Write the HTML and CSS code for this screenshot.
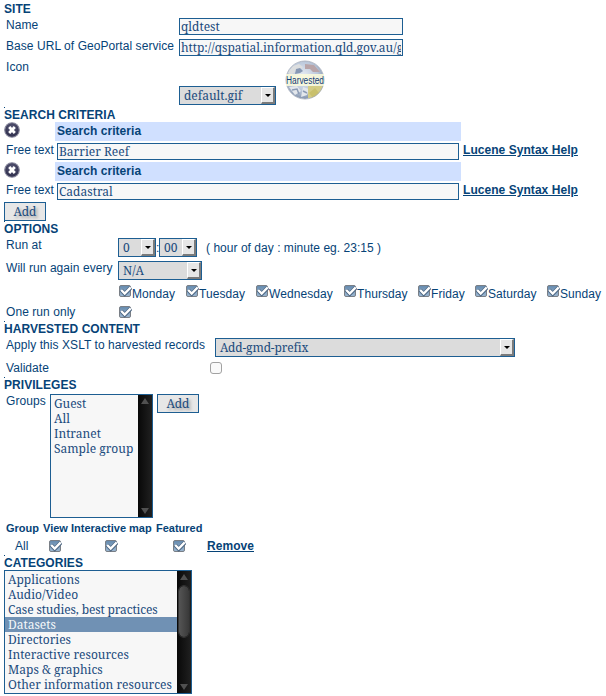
FILE: index.html
```html
<!DOCTYPE html>
<html lang="en">
<head>
<meta charset="utf-8">
<title>Harvesting</title>
<link rel="stylesheet" href="styles.css">
</head>
<body>
<svg width="0" height="0" class="defs">
  <defs>
    <linearGradient id="box" x1="0" y1="0" x2="0" y2="1"><stop offset="0" stop-color="#6489ad"/><stop offset="1" stop-color="#9db8d2"/></linearGradient>
    <radialGradient id="dark" cx=".5" cy=".35" r=".65"><stop offset="0" stop-color="#5a5a78"/><stop offset="1" stop-color="#2a2a48"/></radialGradient>
    <radialGradient id="globe" cx=".45" cy=".4" r=".6"><stop offset="0" stop-color="#e8edf4"/><stop offset=".65" stop-color="#bac7da"/><stop offset="1" stop-color="#8494ad"/></radialGradient>
    <clipPath id="disc"><circle cx="20" cy="20" r="19"/></clipPath>
    <symbol id="check" viewBox="0 0 13 13">
      <rect x=".5" y=".5" width="11" height="11" rx="1.5" fill="url(#box)" stroke="#7a7f86"/>
      <path d="M2.2 5 5.7 8.8 11.9 2.4" fill="none" stroke="#4a6480" stroke-width="4"/>
      <path d="M2.2 5 5.7 8.6 11.7 2.4" fill="none" stroke="#fff" stroke-width="2.3"/>
    </symbol>
    <symbol id="remove" viewBox="0 0 16 16">
      <circle cx="8" cy="8" r="7.3" fill="url(#dark)" stroke="#8a8a9e" stroke-width="1.1"/>
      <path d="M5.2 5 10.8 11M10.8 5 5.2 11" stroke="#fff" stroke-width="2.8"/>
    </symbol>
  </defs>
</svg>
<main>
  <h2>SITE</h2>
  <div class="row site"><label>Name</label><input class="field" value="qldtest"></div>
  <div class="row site"><label>Base URL of GeoPortal service</label><input class="field url" value="http://qspatial.information.qld.gov.au/geoportal"></div>
  <div class="row site icon-row"><label>Icon</label><span class="select w-icon">default.gif<i></i></span>
    <svg class="globe" width="40" height="40" viewBox="0 0 40 40">
      <g clip-path="url(#disc)">
        <circle cx="20" cy="20" r="19" fill="url(#globe)"/>
        <path d="M8 6 14 4 18 7 14 11 10 12 5 16 3 12Z" fill="#dcdedf"/>
        <path d="M20 4 29 5 35 12 28 12 25 9 20 9Z" fill="#b8a4a8"/>
        <path d="M11 9 15 8 18 11 15 13 10 14Z" fill="#8798b3"/>
        <path d="M4 27 12 26 16 31 10 35ZM18 27 24 29 22 35 16 37Z" fill="#e3e7ec"/>
        <path d="M7 30 12 29 14 34M18 31 22 33" fill="none" stroke="#8c9bb4" stroke-width="1.5"/>
        <path d="M23 26H38L36 33 29 39 23 38Z" fill="#d3cc85"/>
        <path d="M24 33 30 28 34 33 29 39Z" fill="#c9c06c"/>
      </g>
      <circle cx="20" cy="20" r="19" fill="none" stroke="#a3abb9" stroke-width=".8"/>
      <rect x="1" y="14" width="38" height="12" fill="#fbfbdc" opacity=".88"/>
      <text x="1" y="24" textLength="38" lengthAdjust="spacingAndGlyphs">Harvested</text>
    </svg>
  </div>

  <h2 class="dot">SEARCH CRITERIA</h2>
  <div class="row criteria"><svg width="16" height="16"><use href="#remove"/></svg><b>Search criteria</b></div>
  <div class="row free"><label>Free text</label><input class="field" value="Barrier Reef"><a>Lucene Syntax Help</a></div>
  <div class="row criteria"><svg width="16" height="16"><use href="#remove"/></svg><b>Search criteria</b></div>
  <div class="row free"><label>Free text</label><input class="field" value="Cadastral"><a>Lucene Syntax Help</a></div>
  <button class="below">Add</button>

  <h2 class="dot">OPTIONS</h2>
  <div class="row options"><label>Run at</label><span class="select w-hour">0<i></i></span><span class="colon">:</span><span class="select w-hour">00<i></i></span><span class="hint">( hour of day : minute eg. 23:15 )</span></div>
  <div class="row options"><label>Will run again every</label><span class="select w-every">N/A<i></i></span></div>
  <div class="days">
    <span class="d67"><svg width="13" height="13"><use href="#check"/></svg>Monday</span>
    <span class="d70"><svg width="13" height="13"><use href="#check"/></svg>Tuesday</span>
    <span class="d88"><svg width="13" height="13"><use href="#check"/></svg>Wednesday</span>
    <span class="d74"><svg width="13" height="13"><use href="#check"/></svg>Thursday</span>
    <span class="d57"><svg width="13" height="13"><use href="#check"/></svg>Friday</span>
    <span class="d72"><svg width="13" height="13"><use href="#check"/></svg>Saturday</span>
    <span><svg width="13" height="13"><use href="#check"/></svg>Sunday</span>
  </div>
  <div class="row once"><label>One run only</label><svg width="13" height="13"><use href="#check"/></svg></div>

  <h2 class="dot">HARVESTED CONTENT</h2>
  <div class="row content"><label>Apply this XSLT to harvested records</label><span class="select w-xslt">Add-gmd-prefix<i></i></span></div>
  <div class="row validate"><label>Validate</label><span class="unchecked"></span></div>

  <h2 class="dot">PRIVILEGES</h2>
  <div class="row groups"><label>Groups</label>
    <div class="list"><ul><li>Guest</li><li>All</li><li>Intranet</li><li>Sample group</li></ul>
      <div class="bar"><i class="up"></i><i class="down"></i></div></div>
    <button>Add</button>
  </div>
  <div class="priv head"><b>Group</b><b>View</b><b>Interactive map</b><b>Featured</b></div>
  <div class="priv"><span>All</span><svg width="13" height="13"><use href="#check"/></svg><svg width="13" height="13"><use href="#check"/></svg><svg width="13" height="13"><use href="#check"/></svg><a>Remove</a></div>

  <h2 class="dot">CATEGORIES</h2>
  <div class="list categories"><ul><li>Applications</li><li>Audio/Video</li><li class="tight">Case studies, best practices</li><li class="on">Datasets</li><li>Directories</li><li>Interactive resources</li><li>Maps &amp; graphics</li><li>Other information resources</li></ul>
    <div class="bar"><i class="up"></i><i class="thumb"></i><i class="down"></i></div></div>
</main>
</body>
</html>
```
FILE: styles.css
```css
* { box-sizing: border-box; }
body { margin: 0; background: #fff; color: #064377; font: 12px/14px "Liberation Sans", Arial, sans-serif; overflow: hidden; }
main { padding: 2px 0 0 4px; }
.defs { position: absolute; }
svg { display: block; flex: none; }
h2 { margin: 0; height: 14px; font-size: 12px; line-height: 14px; letter-spacing: .05px; position: relative; }
.dot::before { content: ""; position: absolute; left: 0; top: -1px; width: 1px; height: 1px; background: #064377; }
label { padding-left: 2px; white-space: nowrap; letter-spacing: .06px; }
a { font-weight: bold; text-decoration: underline; white-space: nowrap; letter-spacing: .05px; }

.row { display: grid; align-items: start; }
.field, .select, button, .list { font-family: "Droid Serif", "Noto Serif", "DejaVu Serif Condensed", "DejaVu Serif", serif; font-size: 12px; color: #1b4b7d; border: 1px solid #1d5e92; border-radius: 0; }
.field { display: block; height: 17px; width: 100%; padding: 0 1px 1px; margin: 0; background: #f7f7f7; outline: 0; }
.url { letter-spacing: -.02px; }
.select { display: flex; align-items: center; justify-content: space-between; height: 19px; padding: 0 0 0 4px; background: #dcdcdc; line-height: 17px; white-space: nowrap; }
.w-xslt { letter-spacing: -.14px; }
.select i { flex: none; width: 14px; height: 17px; background: #e6e6e6; border: 1px solid; border-color: #fff #7b7b7b #7b7b7b #fff; border-right-width: 2px; border-bottom-width: 2px; display: flex; align-items: center; justify-content: center; }
.select i::before { content: ""; border: 3px solid transparent; border-top-color: #000; border-bottom: 0; }
button { display: block; width: 42px; height: 19px; padding: 0; background: #e7e7e7; text-shadow: 2px 2px 3px #999; line-height: 17px; }
.below { margin: 0 0 1px; }

.site { grid-template-columns: 175px 224px auto; height: 21px; margin-top: 0; }
h2 + .row { margin-top: 2px; }
.icon-row { grid-template-columns: 175px 97px auto; height: 48px; }
.w-icon { margin-top: 26px; }
.globe { margin-left: 9px; }
.globe text { font: 10px "Liberation Sans", sans-serif; fill: #123a76; }

h2 + .criteria { margin-top: 0; }
.criteria { grid-template-columns: 51px 406px; height: 21px; }
.criteria b { height: 19px; padding: 2px; background: #d0e0ff; letter-spacing: .05px; }
.free { grid-template-columns: 53px 402px auto; column-gap: 0; height: 19px; }
.free a { margin-left: 4px; }

.options { grid-template-columns: 114px auto auto auto 1fr; height: 23px; }
.w-hour { width: 38px; }
.colon { width: 3px; margin-top: 3px; }
.hint { margin: 3px 0 0 9px; letter-spacing: .03px; }
.w-every { width: 84px; }
.days { display: flex; height: 21px; padding: 1px 0 0 115px; }
.days span { display: flex; flex: none; line-height: 18px; white-space: nowrap; letter-spacing: .08px; }
.days .d67 { width: 67px; }
.days .d70 { width: 70px; }
.days .d88 { width: 88px; }
.days .d74 { width: 74px; }
.days .d57 { width: 57px; }
.days .d72 { width: 72px; }
.once { grid-template-columns: 115px auto; height: 17px; }
.once svg { margin-top: 1px; }

.content { grid-template-columns: 211px 300px; height: 23px; }
.validate { grid-template-columns: 206px auto; height: 17px; }
.unchecked { width: 12px; height: 12px; margin-top: 1px; border: 1px solid #a2a2a2; border-radius: 3px; background: #fafafa; }

.groups { grid-template-columns: 46px 103px 42px; height: 127px; }
.groups button { margin-left: 4px; }
.list { display: flex; height: 124px; background: #f7f7f7; }
.list ul { flex: 1; margin: 0; padding: 1px 0; list-style: none; }
.list li { height: 15px; padding-left: 3px; line-height: 15px; white-space: nowrap; }
.list .tight { letter-spacing: -.13px; }
.list .on { background: #7091b4; color: #f4f7fa; }
.bar { width: 14px; display: flex; flex-direction: column; align-items: center; padding: 3px 0; background: linear-gradient(90deg, #080808, #202020); }
.up, .down { border: 4px solid transparent; }
.up { border-bottom: 6px solid #505050; border-top: 0; }
.down { border-top: 6px solid #505050; border-bottom: 0; margin-top: auto; }
.thumb { width: 12px; height: 53px; margin-top: 5px; border: 1px solid #080808; outline: 1px solid #333; outline-offset: -1px; border-radius: 6px; background: linear-gradient(90deg, #555, #393939); }

.priv { display: grid; grid-template-columns: 45px 56px 68px 34px auto; height: 17px; }
.priv span { padding-left: 11px; }
.priv svg { margin-top: 1px; }
.head { display: flex; height: 18px; font-size: 11px; padding-left: 2px; white-space: nowrap; }
.head b:nth-child(1) { width: 37px; }
.head b:nth-child(2) { width: 28px; }
.head b:nth-child(3) { width: 85px; }
.categories { width: 188px; }
```
